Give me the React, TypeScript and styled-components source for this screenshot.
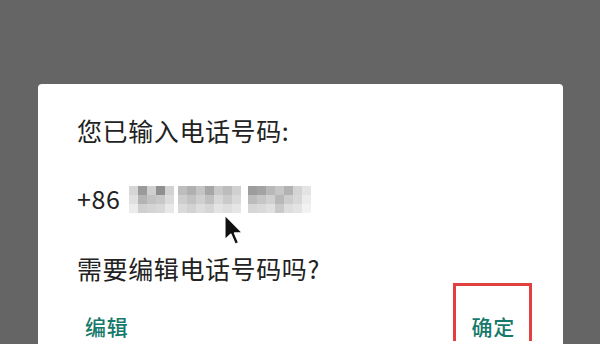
import React from "react";
import styled, { createGlobalStyle } from "styled-components";

const GlobalStyle = createGlobalStyle`
  html, body {
    margin: 0;
    padding: 0;
    background: #656565;
    height: 100%;
    overflow: hidden;
  }
  #root {
    height: 100%;
  }
`;

const Screen = styled.div`
  height: 344px;
  padding-top: 84px;
  padding-left: 38px;
  box-sizing: border-box;
  overflow: hidden;
  font-family: "Noto Sans CJK SC", "Noto Sans", sans-serif;
`;

const Dialog = styled.div`
  width: 525px;
  height: 260px;
  background: #ffffff;
  border-radius: 4px 4px 0 0;
  box-sizing: border-box;
  padding: 28px 39px 0 39px;
  display: flex;
  flex-direction: column;
`;

const Line = styled.div<{ $gap?: number }>`
  font-size: 25px;
  line-height: 36px;
  letter-spacing: 0.6px;
  color: #222222;
  margin-top: ${({ $gap }) => $gap ?? 0}px;
  white-space: nowrap;
`;

const PhoneRow = styled(Line)`
  position: relative;
  display: flex;
  align-items: center;
  gap: 9px;
`;

const Mosaic = styled.svg`
  display: block;
  margin-top: 2px;
`;

const Cursor = styled.svg`
  position: absolute;
  left: 146px;
  top: 33px;
`;

const ButtonRow = styled.div`
  display: flex;
  justify-content: space-between;
  padding: 0 9px 0 8px;
  margin-top: 25px;
`;

const ActionButton = styled.span`
  position: relative;
  font-size: 21px;
  line-height: 30px;
  font-weight: 500;
  color: #16796b;
  letter-spacing: 0.8px;
`;

const Highlight = styled.span`
  position: absolute;
  left: -18px;
  right: -17px;
  top: -28px;
  height: 58px;
  border: 3px solid #e0403f;
  border-bottom: none;
  box-sizing: border-box;
`;

const cells: [number, number, string][][] = [
  // group 1
  [
    [0, 0, "#d6d6d6"], [9, 0, "#9a9a9a"], [18, 0, "#cfcfcf"], [27, 0, "#8f8f8f"], [36, 0, "#d2d2d2"],
    [0, 9, "#e0e0e0"], [9, 9, "#b4b4b4"], [18, 9, "#c2c2c2"], [27, 9, "#c8c8c8"], [36, 9, "#dcdcdc"],
    [0, 18, "#ececec"], [9, 18, "#cfcfcf"], [18, 18, "#d4d4d4"], [27, 18, "#d8d8d8"], [36, 18, "#e8e8e8"],
  ],
  // group 2
  [
    [49, 0, "#bdbdbd"], [58, 0, "#b0b0b0"], [67, 0, "#c4c4c4"], [76, 0, "#a6a6a6"], [85, 0, "#c9c9c9"], [94, 0, "#bcbcbc"], [103, 0, "#d0d0d0"],
    [49, 9, "#cdcdcd"], [58, 9, "#c2c2c2"], [67, 9, "#cfcfcf"], [76, 9, "#c0c0c0"], [85, 9, "#d8d8d8"], [94, 9, "#cacaca"], [103, 9, "#d9d9d9"],
    [49, 18, "#dadada"], [58, 18, "#d2d2d2"], [67, 18, "#dddddd"], [76, 18, "#d6d6d6"], [85, 18, "#e4e4e4"], [94, 18, "#dedede"], [103, 18, "#e6e6e6"],
  ],
  // group 3
  [
    [119, 0, "#9d9d9d"], [128, 0, "#a3a3a3"], [137, 0, "#b8b8b8"], [146, 0, "#c6c6c6"], [155, 0, "#b2b2b2"], [164, 0, "#d4d4d4"], [173, 0, "#e4e4e4"],
    [119, 9, "#bcbcbc"], [128, 9, "#c6c6c6"], [137, 9, "#d0d0d0"], [146, 9, "#b8b8b8"], [155, 9, "#cdcdcd"], [164, 9, "#d8d8d8"], [173, 9, "#ececec"],
    [119, 18, "#d6d6d6"], [128, 18, "#dadada"], [137, 18, "#e0e0e0"], [146, 18, "#c9c9c9"], [155, 18, "#dedede"], [164, 18, "#e4e4e4"], [173, 18, "#f2f2f2"],
  ],
];

function BlurredNumber() {
  return (
    <Mosaic width={184} height={27} viewBox="0 0 184 27">
      {cells.flat().map(([x, y, fill], i) => (
        <rect key={i} x={x} y={y} width={9} height={9} fill={fill} />
      ))}
    </Mosaic>
  );
}

function ArrowCursor() {
  return (
    <Cursor width={22} height={34} viewBox="0 0 13 20">
      <path
        d="M1 1 L1 16 L4.6 12.6 L7.2 18.6 L9.4 17.6 L6.9 11.8 L11.8 11.8 Z"
        fill="#111"
        stroke="#fff"
        strokeWidth={1}
        strokeLinejoin="round"
      />
    </Cursor>
  );
}

export default function App() {
  return (
    <>
      <GlobalStyle />
      <Screen>
        <Dialog>
          <Line>您已输入电话号码:</Line>
          <PhoneRow $gap={32}>
            <span>+86</span>
            <BlurredNumber />
            <ArrowCursor />
          </PhoneRow>
          <Line $gap={34}>需要编辑电话号码吗?</Line>
          <ButtonRow>
            <ActionButton>编辑</ActionButton>
            <ActionButton>
              确定
              <Highlight />
            </ActionButton>
          </ButtonRow>
        </Dialog>
      </Screen>
    </>
  );
}
